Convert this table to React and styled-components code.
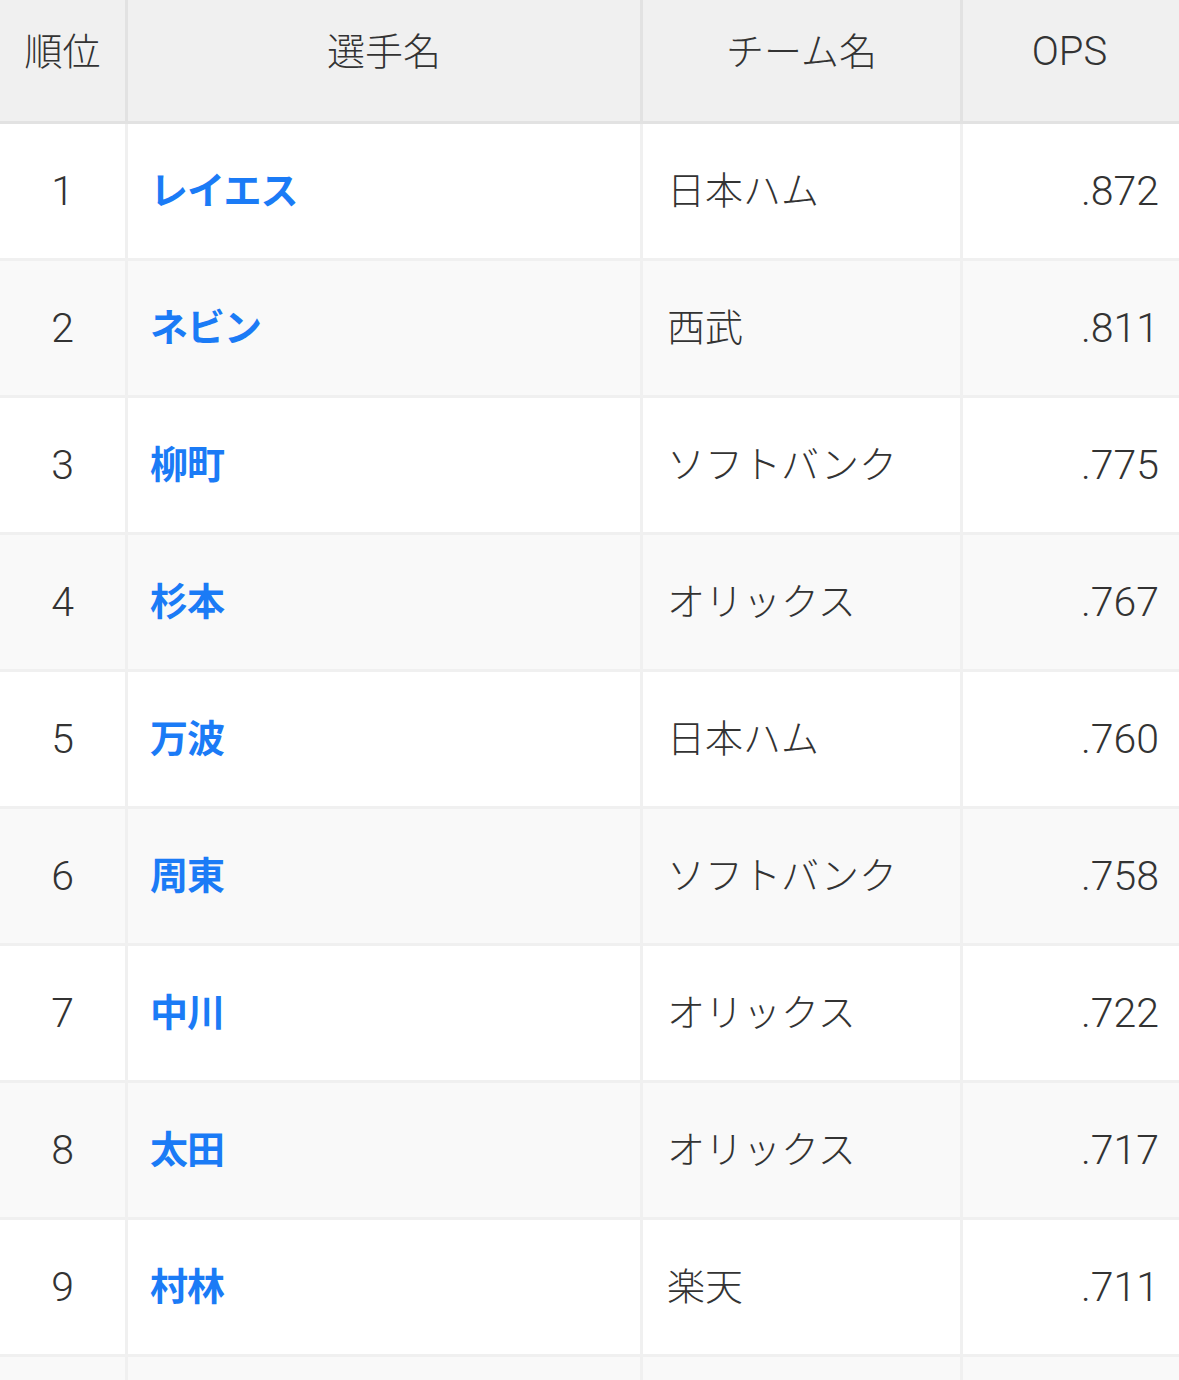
import React from 'react';
import styled, { createGlobalStyle } from 'styled-components';

const GlobalStyle = createGlobalStyle`
  html, body {
    margin: 0;
    padding: 0;
    background: #ffffff;
    overflow: hidden;
  }
  body {
    font-family: 'Noto Sans CJK JP', 'Noto Sans', sans-serif;
  }
`;

const rankings = [
  { rank: 1, name: 'レイエス', team: '日本ハム', ops: '.872' },
  { rank: 2, name: 'ネビン', team: '西武', ops: '.811' },
  { rank: 3, name: '柳町', team: 'ソフトバンク', ops: '.775' },
  { rank: 4, name: '杉本', team: 'オリックス', ops: '.767' },
  { rank: 5, name: '万波', team: '日本ハム', ops: '.760' },
  { rank: 6, name: '周東', team: 'ソフトバンク', ops: '.758' },
  { rank: 7, name: '中川', team: 'オリックス', ops: '.722' },
  { rank: 8, name: '太田', team: 'オリックス', ops: '.717' },
  { rank: 9, name: '村林', team: '楽天', ops: '.711' },
  { rank: 10, name: '', team: '', ops: '' },
];

const Table = styled.table`
  width: 1182px;
  table-layout: fixed;
  border-collapse: separate;
  border-spacing: 0;
  font-size: 38px;
  font-weight: 300;
  color: #333333;
`;

const Col = styled.col`
  width: ${props => props.$width}px;
`;

const HeadCell = styled.th`
  box-sizing: border-box;
  height: 124px;
  padding: 19px ${props => props.$padRight || 0}px 0 0;
  vertical-align: top;
  text-align: center;
  font-weight: 300;
  line-height: 60px;
  background: #f0f0f0;
  border-right: 3px solid #e2e2e2;
  border-bottom: 3px solid #e2e2e2;
`;

const Latin = styled.span`
  font-family: Roboto, 'Noto Sans CJK JP', sans-serif;
  font-size: 40px;
  font-weight: 300;
`;

const Row = styled.tr`
  background: ${props => (props.$striped ? '#f9f9f9' : '#ffffff')};
`;

const Cell = styled.td`
  box-sizing: border-box;
  height: 137px;
  padding: 0;
  vertical-align: middle;
  line-height: 1;
  white-space: nowrap;
  border-right: 3px solid #f0f0f0;
  border-bottom: 3px solid #f0f0f0;
`;

const RankCell = styled(Cell)`
  text-align: center;
  font-family: Roboto, sans-serif;
  font-size: 41px;
  font-weight: 300;
`;

const NameCell = styled(Cell)`
  padding: 0 0 6px 22px;
`;

const TeamCell = styled(Cell)`
  padding: 0 0 6px 24px;
`;

const OpsCell = styled(Cell)`
  text-align: right;
  padding-right: 20px;
  font-family: Roboto, sans-serif;
  font-size: 41px;
  font-weight: 300;
`;

const PlayerLink = styled.a`
  color: #1b7bf6;
  font-weight: 700;
  letter-spacing: -1px;
  text-decoration: none;
`;

export default function App() {
  return (
    <>
      <GlobalStyle />
      <Table>
        <colgroup>
          <Col $width={128} />
          <Col $width={515} />
          <Col $width={320} />
          <Col $width={219} />
        </colgroup>
        <thead>
          <tr>
            <HeadCell>順位</HeadCell>
            <HeadCell>選手名</HeadCell>
            <HeadCell>チーム名</HeadCell>
            <HeadCell $padRight={3}><Latin>OPS</Latin></HeadCell>
          </tr>
        </thead>
        <tbody>
          {rankings.map((r, i) => (
            <Row key={r.rank} $striped={i % 2 === 1}>
              <RankCell>{r.name ? r.rank : ''}</RankCell>
              <NameCell>
                <PlayerLink href="#">{r.name}</PlayerLink>
              </NameCell>
              <TeamCell>{r.team}</TeamCell>
              <OpsCell>{r.ops}</OpsCell>
            </Row>
          ))}
        </tbody>
      </Table>
    </>
  );
}
